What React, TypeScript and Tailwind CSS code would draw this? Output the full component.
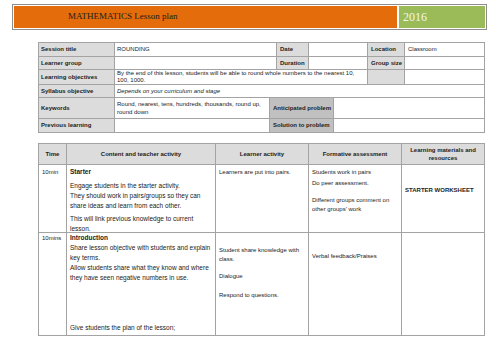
import React from "react";

const sans = { fontFamily: '"Liberation Sans", Arial, sans-serif' };

export default function App() {
  return (
    <div className="w-[500px] h-[354px] bg-white overflow-hidden text-[#222]" style={sans}>
      {/* Title banner */}
      <div className="ml-[12px] mt-[4px] w-[475px] h-[26px] border border-[#8c8c8c] bg-white p-[1px] flex gap-[2px]">
        <div className="flex-1 bg-[#e46c0a] flex items-center pl-[54px] font-['Liberation_Serif',serif] text-[9px] text-[#1c1c1c]">
          MATHEMATICS Lesson plan
        </div>
        <div className="w-[86px] bg-[#9bbb59] flex items-center pl-[4px] font-['Liberation_Serif',serif] text-[12px] text-[#f4f7ee]">
          2016
        </div>
      </div>

      {/* Session table */}
      <div className="ml-[38px] mt-[12px] w-[447px] border-l border-t border-[#a3a3a3] text-[6px] leading-[7px]">
        <div className="flex h-[14px]">
          <div className="w-[76px] bg-[#dcdcdc] border-r border-b border-[#a3a3a3] flex items-center pl-[2px] font-bold">Session title</div>
          <div className="w-[162px] border-r border-b border-[#a3a3a3] flex items-center pl-[2px]">ROUNDING</div>
          <div className="w-[32px] bg-[#dcdcdc] border-r border-b border-[#a3a3a3] flex items-center pl-[3px] font-bold">Date</div>
          <div className="w-[59px] border-r border-b border-[#a3a3a3]"></div>
          <div className="w-[37px] bg-[#dcdcdc] border-r border-b border-[#a3a3a3] flex items-center pl-[3px] font-bold">Location</div>
          <div className="w-[80px] border-r border-b border-[#a3a3a3] flex items-center pl-[3px]">Classroom</div>
        </div>
        <div className="flex h-[13px]">
          <div className="w-[76px] bg-[#dcdcdc] border-r border-b border-[#a3a3a3] flex items-center pl-[2px] font-bold">Learner group</div>
          <div className="w-[162px] border-r border-b border-[#a3a3a3]"></div>
          <div className="w-[32px] bg-[#dcdcdc] border-r border-b border-[#a3a3a3] flex items-center pl-[3px] font-bold">Duration</div>
          <div className="w-[59px] border-r border-b border-[#a3a3a3]"></div>
          <div className="w-[37px] bg-[#dcdcdc] border-r border-b border-[#a3a3a3] flex items-center pl-[3px] font-bold">Group size</div>
          <div className="w-[80px] border-r border-b border-[#a3a3a3]"></div>
        </div>
        <div className="flex h-[15px]">
          <div className="w-[76px] bg-[#dcdcdc] border-r border-b border-[#a3a3a3] flex items-center pl-[2px] font-bold">Learning objectives</div>
          <div className="w-[253px] border-r border-b border-[#a3a3a3] flex items-center pl-[2px] pr-[2px]">
            By the end of this lesson, students will be able to round whole numbers to the nearest 10, 100, 1000.
          </div>
          <div className="w-[37px] bg-[#dcdcdc] border-r border-b border-[#a3a3a3]"></div>
          <div className="w-[80px] border-r border-b border-[#a3a3a3]"></div>
        </div>
        <div className="flex h-[13px]">
          <div className="w-[76px] bg-[#dcdcdc] border-r border-b border-[#a3a3a3] flex items-center pl-[2px] font-bold">Syllabus objective</div>
          <div className="w-[370px] border-r border-b border-[#a3a3a3] flex items-center pl-[2px] italic">Depends on your curriculum and stage</div>
        </div>
        <div className="flex h-[21px]">
          <div className="w-[76px] bg-[#dcdcdc] border-r border-b border-[#a3a3a3] flex items-center pl-[2px] font-bold">Keywords</div>
          <div className="w-[155px] border-r border-b border-[#a3a3a3] flex items-center pl-[2px] pr-[2px] leading-[8px]">
            Round, nearest, tens, hundreds, thousands, round up, round down
          </div>
          <div className="w-[64px] bg-[#c0c0c0] border-r border-b border-[#a3a3a3] flex items-center pl-[3px] font-bold">Anticipated problem</div>
          <div className="w-[151px] border-r border-b border-[#a3a3a3]"></div>
        </div>
        <div className="flex h-[14px]">
          <div className="w-[76px] bg-[#dcdcdc] border-r border-b border-[#a3a3a3] flex items-center pl-[2px] font-bold">Previous learning</div>
          <div className="w-[155px] border-r border-b border-[#a3a3a3]"></div>
          <div className="w-[64px] bg-[#c0c0c0] border-r border-b border-[#a3a3a3] flex items-center pl-[3px] font-bold">Solution to problem</div>
          <div className="w-[151px] border-r border-b border-[#a3a3a3]"></div>
        </div>
      </div>

      {/* Plan table */}
      <div className="ml-[38px] mt-[10px] w-[447px] border-l border-t border-[#a3a3a3] text-[6px] leading-[9px]">
        <div className="flex h-[21px] bg-[#dcdcdc] font-bold text-center leading-[8px]">
          <div className="w-[28px] border-r border-b border-[#a3a3a3] flex items-center justify-center">Time</div>
          <div className="w-[149px] border-r border-b border-[#a3a3a3] flex items-center justify-center">Content and teacher activity</div>
          <div className="w-[93px] border-r border-b border-[#a3a3a3] flex items-center justify-center">Learner activity</div>
          <div className="w-[93px] border-r border-b border-[#a3a3a3] flex items-center justify-center">Formative assessment</div>
          <div className="w-[83px] border-r border-b border-[#a3a3a3] flex items-center justify-center px-[4px]">Learning materials and resources</div>
        </div>
        <div className="flex h-[68px]">
          <div className="w-[28px] border-r border-b border-[#a3a3a3] pl-[3px] pt-[3px]">10min</div>
          <div className="w-[149px] border-r border-b border-[#a3a3a3] pl-[3px] pr-[2px] pt-[2px] text-[6.5px] leading-[10px]">
            <div className="font-bold">Starter</div>
            <div className="mt-[4px]">Engage students in the starter activity.</div>
            <div>They should work in pairs/groups so they can</div>
            <div>share ideas and learn from each other.</div>
            <div className="mt-[3px]">This will link previous knowledge to current</div>
            <div className="leading-[9px]">lesson.</div>
          </div>
          <div className="w-[93px] border-r border-b border-[#a3a3a3] pl-[3px] pt-[3px]">Learners are put into pairs.</div>
          <div className="w-[93px] border-r border-b border-[#a3a3a3] pl-[3px] pt-[3px] leading-[9px]">
            <div>Students work in pairs</div>
            <div className="mt-[2px]">Do peer assessment.</div>
            <div className="mt-[8px]">Different groups comment on</div>
            <div>other groups&#8217; work</div>
          </div>
          <div className="w-[83px] border-r border-b border-[#a3a3a3] pl-[3px] pt-[21px] font-bold">STARTER WORKSHEET</div>
        </div>
        <div className="flex h-[103px]">
          <div className="w-[28px] border-r border-b border-[#a3a3a3] pl-[3px] pt-[1px]">10mins</div>
          <div className="w-[149px] border-r border-b border-[#a3a3a3] pl-[3px] pr-[2px] pt-0 text-[6.5px] leading-[10px]">
            <div className="font-bold">Introduction</div>
            <div>Share lesson objective with students and explain key terms.</div>
            <div>Allow students share what they know and where they have seen negative numbers in use.</div>
            <div className="mt-[40px]">Give students the plan of the lesson;</div>
          </div>
          <div className="w-[93px] border-r border-b border-[#a3a3a3] pl-[3px] pr-[2px] pt-[13px]">
            <div>Student share knowledge with class.</div>
            <div className="mt-[8px]">Dialogue</div>
            <div className="mt-[10px]">Respond to questions.</div>
          </div>
          <div className="w-[93px] border-r border-b border-[#a3a3a3] pl-[3px] pt-[19px]">Verbal feedback/Praises</div>
          <div className="w-[83px] border-r border-b border-[#a3a3a3]"></div>
        </div>
      </div>
    </div>
  );
}
